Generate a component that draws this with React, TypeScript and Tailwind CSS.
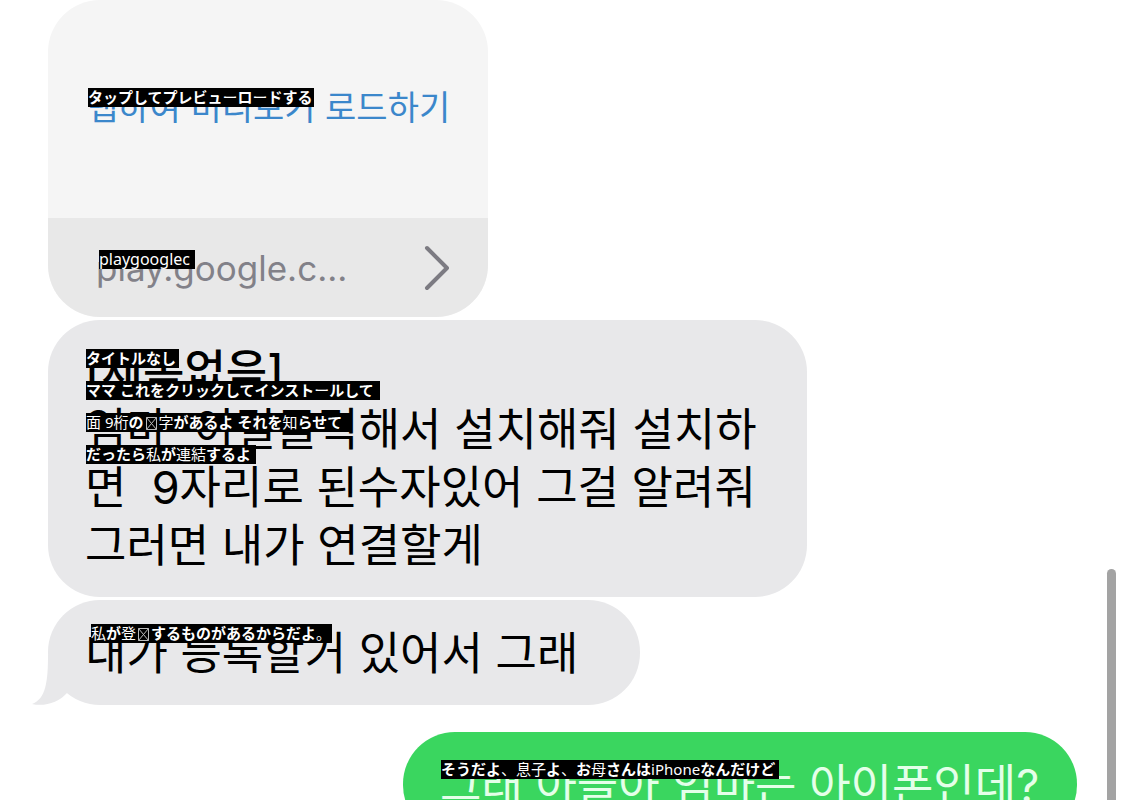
import { Fragment } from 'react';
import clsx from 'clsx';

// Kana are set heavy, everything else in a label stays light
function LabelText({ text }: { text: string }) {
  const parts = text.split(/([ぁ-ゖァ-ヺ]+|☒)/);
  return (
    <>
      {parts.map((part, i) => {
        if (part === '☒') {
          return (
            <svg key={i} viewBox="0 0 15 15" className="inline-block h-[15px] w-[15px] align-middle" fill="none" stroke="#bbb">
              <path d="M2.5 1.5h10v12h-10zM2.5 1.5l10 12M12.5 1.5l-10 12" />
            </svg>
          );
        }
        if (i % 2 === 1) return <span key={i} className="font-bold">{part}</span>;
        return <Fragment key={i}>{part}</Fragment>;
      })}
    </>
  );
}

function Label({ text, className, size = 'text-[15px]' }: { text: string; className?: string; size?: string }) {
  return (
    <span
      className={clsx(
        "block h-[19px] whitespace-nowrap bg-black font-['Noto_Sans','Noto_Sans_CJK_JP',sans-serif] leading-[19px] text-white",
        size,
        className
      )}
    >
      <LabelText text={text} />
    </span>
  );
}

const translations = [
  { text: 'タイトルなし', width: 'w-[93px]' },
  { text: 'ママ これをクリックしてインストールして', width: 'w-[294px]' },
  { text: '面 9桁の☒字があるよ それを知らせて', width: 'w-[266px]' },
  { text: 'だったら私が連結するよ', width: 'w-[170px]' },
];

export default function App() {
  return (
    <main className="relative flex h-screen flex-col items-start overflow-hidden bg-white pl-12 pr-12 font-['Inter','Noto_Sans_CJK_KR',sans-serif] text-black">
      {/* Link preview */}
      <section className="w-[440px] shrink-0 overflow-hidden rounded-[52px] bg-[#f5f5f5]">
        <div className="relative flex h-[218px] items-center pb-[2px] pl-[39px]">
          <button type="button" className="block whitespace-nowrap text-[34px] leading-[54px] text-[#3b87cb]">
            탭하여 미리보기 로드하기
          </button>
          <Label text="タップしてプレビューロードする" className="absolute left-10 top-[88px] w-[226px]" />
        </div>
        <div className="relative flex h-[99px] items-center justify-between bg-[#e8e8e8] pl-12 pr-9">
          <a href="#preview" className="text-[35px] leading-[54px] text-[#828188]">
            play.google.c...
          </a>
          <svg viewBox="0 0 28 46" className="h-[46px] w-7" fill="none" stroke="#7c7b82" strokeWidth="4" strokeLinecap="round" strokeLinejoin="round">
            <path d="M3 3L23 23L3 43" />
          </svg>
          <Label text="playgooglec" size="text-[16px]" className="absolute left-[51px] top-8 w-24" />
        </div>
      </section>

      {/* Incoming messages */}
      <section className="relative mt-[3px] w-[759px] shrink-0 rounded-[52px] bg-[#e8e8ea] pb-[22px] pl-[37px] pt-[23px] text-[45px] leading-[58px]">
        <h2 className="font-medium">[제목없음]</h2>
        <p className="whitespace-pre">
          {'엄마  이걸클릭해서 설치해줘 설치하\n면  9자리로 된수자있어 그걸 알려줘\n그러면 내가 연결할게'}
        </p>
        <div className="absolute left-[38px] top-[29px] flex flex-col gap-[13px]">
          {translations.map((t) => (
            <Label key={t.text} text={t.text} className={t.width} />
          ))}
        </div>
      </section>

      <section className="relative mt-[3px] w-[592px] shrink-0 rounded-[52px] bg-[#e8e8ea] pb-[22px] pl-[37px] pt-[25px] text-[45px] leading-[58px]">
        <svg viewBox="0 0 60 50" className="absolute -left-4 bottom-0 h-[50px] w-[60px]">
          <path d="M16 0C16 26 14 44 0 49C13 52 27 47 35 38L60 20V0Z" fill="#e8e8ea" />
        </svg>
        <p className="relative whitespace-nowrap">내가 등록할거 있어서 그래</p>
        <Label text="私が登☒するものがあるからだよ。" className="absolute left-[43px] top-6 w-[241px]" />
      </section>

      {/* Reply */}
      <section className="relative mt-[27px] w-[674px] shrink-0 self-end rounded-[52px] bg-[#3ad65f] pb-[22px] pl-[37px] pt-[25px] text-[45px] leading-[58px] text-[#e4ffe9]">
        <p className="whitespace-nowrap">그래 아들아 엄마는 아이폰인데?</p>
        <Label text="そうだよ、息子よ、お母さんはiPhoneなんだけど" className="absolute left-[38px] top-7 w-[338px]" />
      </section>

      {/* Scroll thumb */}
      <div className="absolute -bottom-4 right-[9px] top-[569px] w-[9px] rounded-full bg-[#a3a3a3]" />
    </main>
  );
}
